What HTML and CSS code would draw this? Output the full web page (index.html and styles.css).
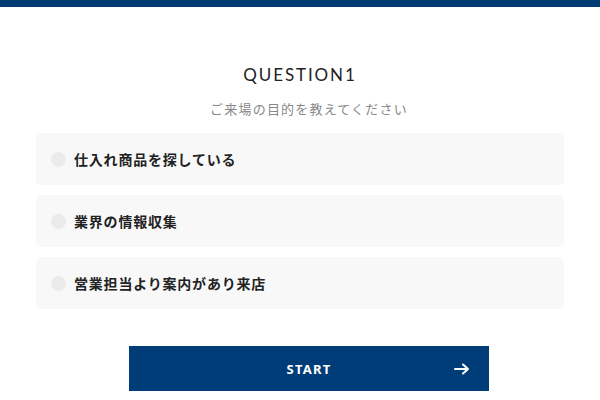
FILE: index.html
```html
<!DOCTYPE html>
<html lang="ja">
<head>
<meta charset="utf-8">
<link rel="stylesheet" href="styles.css">
</head>
<body>
<div class="topbar"></div>
<main class="wrap">
  <h1 class="title">QUESTION1</h1>
  <p class="sub">ご来場の目的を教えてください</p>
  <ul class="options">
    <li class="option"><span class="radio"></span><span class="label">仕入れ商品を探している</span></li>
    <li class="option"><span class="radio"></span><span class="label">業界の情報収集</span></li>
    <li class="option"><span class="radio"></span><span class="label">営業担当より案内があり来店</span></li>
  </ul>
  <button class="start"><span class="start-text">START</span>
    <svg class="arrow" width="16" height="12" viewBox="0 0 16 12"><path d="M1 6H14M9 1.5L14 6L9 10.5" fill="none" stroke="#fff" stroke-width="2" stroke-linecap="round" stroke-linejoin="round"/></svg>
  </button>
</main>
</body>
</html>
```
FILE: styles.css
```css
html, body { margin: 0; padding: 0; background: #fff; }
body { font-family: "Noto Sans CJK JP", "Noto Sans", sans-serif; }
.topbar { height: 7px; background: #003b73; }
.wrap { width: 528px; margin: 0 auto; display: flex; flex-direction: column; align-items: center; }
.title {
  margin: 55px 0 0; font-family: "Lato", "Open Sans", sans-serif; font-weight: 400;
  font-size: 17px; letter-spacing: 1.9px; color: #222; line-height: 26px;
}
.sub {
  margin: 11px 0 0 18px; font-size: 13px; letter-spacing: 1.2px; color: #888; line-height: 20px;
}
.options { list-style: none; margin: 14px 0 0; padding: 0; width: 100%; display: flex; flex-direction: column; gap: 10px; }
.option {
  height: 52px; background: #f8f8f8; border-radius: 5px; display: flex; align-items: center;
  padding-left: 15px; box-sizing: border-box;
}
.radio { width: 15px; height: 15px; border-radius: 50%; background: #ebebeb; flex: none; }
.label { margin-left: 8px; font-size: 14px; font-weight: 700; color: #222; letter-spacing: 0.8px; }
.start {
  margin: 37px 0 0 18px; width: 360px; height: 45px; background: #003c78; border: 0; border-radius: 0;
  position: relative; display: flex; align-items: center; justify-content: center; padding: 0; cursor: pointer;
}
.start-text { font-family: "Noto Sans", sans-serif; font-weight: 700; font-size: 13px; letter-spacing: 1.2px; color: #fff; }
.arrow { position: absolute; right: 19px; top: 17px; }
```
